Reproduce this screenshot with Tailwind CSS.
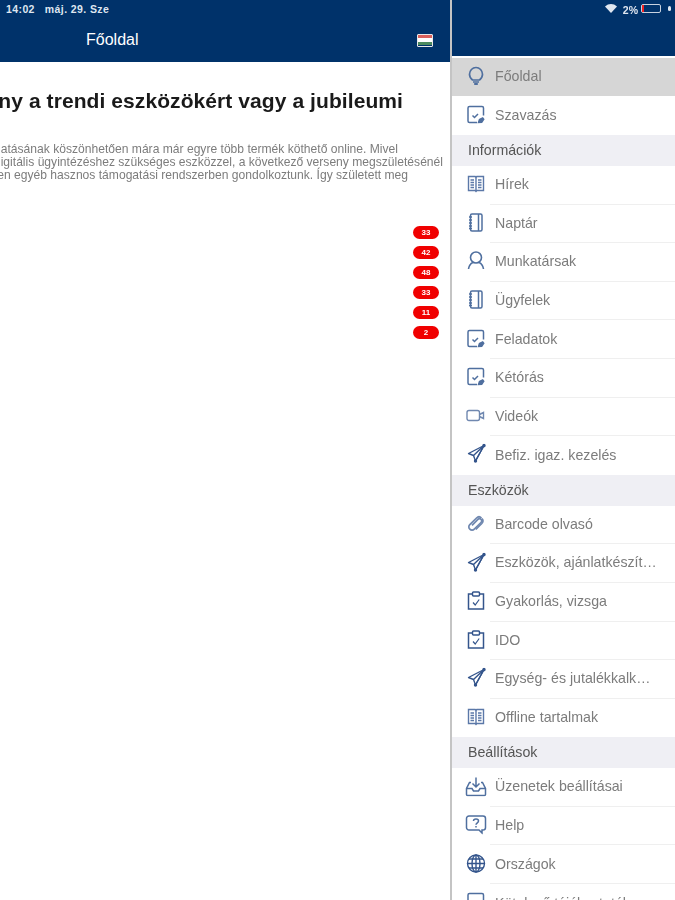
<!DOCTYPE html>
<html lang="hu">
<head>
    <meta charset="UTF-8">
    <meta name="viewport" content="width=device-width, initial-scale=1.0">
    <title>Főoldal</title>
    <script src="https://cdn.jsdelivr.net/npm/@tailwindcss/browser@4"></script>
</head>
<body class="font-['Liberation_Sans',Arial,sans-serif] bg-white">
    <!-- Icon set -->
    <svg class="hidden">
        <symbol id="i-bulb" viewBox="0 0 20 20" fill="none" stroke="currentColor" stroke-width="1.7"><path d="M6.5 14.500C4.500 13 3.500 11 3.500 8.800 3.500 5 6.400 2 10 2s6.500 3 6.500 6.800c0 2.200-1 4.200-3 5.700z"/><path d="M7 16.500h6"/><path d="M8.200 18.500h3.600" stroke-width="2.200"/></symbol>
        <symbol id="i-note" viewBox="0 0 20 20" fill="none" stroke="currentColor" stroke-width="1.500"><path d="M17.500 11V3.500A1.500 1.500 0 0 0 16 2H3.500A1.500 1.500 0 0 0 2 3.500v13A1.500 1.500 0 0 0 3.500 18H11"/><path d="M6.500 11l2 2 3.500-3.500"/><path d="M12.500 18l1-3 3.200-1.500 1 1.300-2 3z" fill="currentColor"/></symbol>
        <symbol id="i-book" viewBox="0 0 20 20" fill="none" stroke="currentColor" stroke-width="1.400"><path d="M2.500 3h6.700l.8 1 .8-1h6.700v14h-6.700l-.8 1-.8-1H2.500z"/><path d="M10 4v13M4.500 6.500h3.500M4.500 9h3.500M4.500 11.500h3.500M4.500 14h3.500M12 6.500h3.500M12 9h3.500M12 11.500h3.500M12 14h3.500"/></symbol>
        <symbol id="i-notebook" viewBox="0 0 20 20" fill="none" stroke="currentColor" stroke-width="1.500"><rect x="4.500" y="1.500" width="11.500" height="17" rx="1.500"/><path d="M12.500 1.500v17M3 4.500h3M3 7.500h3M3 10.500h3M3 13.500h3M3 16h3"/></symbol>
        <symbol id="i-user" viewBox="0 0 20 20" fill="none" stroke="currentColor" stroke-width="1.600"><path d="M10 1.500a5.500 5.500 0 0 1 5.500 5.500c0 3-2.500 5.500-5.500 5.500S4.500 10 4.500 7A5.500 5.500 0 0 1 10 1.500z"/><path d="M7 12C4.500 13 3 15 2.500 18.500M13 12c2.500 1 4 3 4.500 6.500"/></symbol>
        <symbol id="i-video" viewBox="0 0 20 20" fill="none" stroke="currentColor" stroke-width="1.400"><rect x="1" y="5" width="12.500" height="10" rx="2"/><path d="M13.500 9l4-2v6l-4-2"/></symbol>
        <symbol id="i-plane" viewBox="0 0 20 20" fill="none" stroke="currentColor" stroke-width="1.400" stroke-linejoin="round"><path d="M18 2L2.500 10l5 2 2 5.500z"/><path d="M18 2L7.500 12M18 2L9.500 17.500"/><circle cx="18" cy="2" r="1" fill="currentColor"/><circle cx="9.500" cy="17.500" r="1" fill="currentColor"/></symbol>
        <symbol id="i-clip" viewBox="0 0 20 20" fill="none" stroke="currentColor" stroke-width="1.700"><path d="M15.500 4.500c-1.500-1.500-3.500-1.500-5 0L3.800 11.200c-1.300 1.300-1.300 3.300 0 4.500 1.300 1.300 3.200 1.300 4.500 0L15 9c1-1 1-2.300.1-3.200-.9-.9-2.200-.9-3.200.1L6 11.800"/><path d="M16 5c1.200 1.500 1.200 3.500-.2 5l-6 6"/></symbol>
        <symbol id="i-board" viewBox="0 0 20 20" fill="none" stroke="currentColor" stroke-width="1.500"><path d="M6.500 3.500H2.500v15h15v-15h-4"/><rect x="6.500" y="1.500" width="7" height="4" rx="1"/><path d="M7 12l2.200 2.500 4-5.500" stroke-width="1.200"/></symbol>
        <symbol id="i-inbox" viewBox="0 0 22 20" fill="none" stroke="currentColor" stroke-width="1.500"><path d="M6 6H4.500L1.500 12v6a1 1 0 0 0 1 1h17a1 1 0 0 0 1-1v-6l-3-6H16"/><path d="M1.500 12h5.500l1.500 2.500h5L15 12h5.500"/><path d="M11 1v9M7.500 7l3.500 3.500L14.500 7"/></symbol>
        <symbol id="i-help" viewBox="0 0 22 20" fill="none" stroke="currentColor" stroke-width="1.500"><path d="M4 1.500h14a2.500 2.500 0 0 1 2.500 2.500v9a2.500 2.500 0 0 1-2.500 2.500h-1v3l-3-3H4A2.500 2.500 0 0 1 1.500 13V4A2.500 2.500 0 0 1 4 1.500z"/><path d="M8.500 6.500C8.500 5 9.600 4.500 11 4.500s2.500.8 2.500 2c0 1.800-2.500 1.800-2.500 3.800M11 11.500v1.500"/></symbol>
        <symbol id="i-globe" viewBox="0 0 20 20" fill="none" stroke="currentColor" stroke-width="1.400"><circle cx="10" cy="10" r="8.500"/><ellipse cx="10" cy="10" rx="4" ry="8.500"/><path d="M10 1.500v17M1.500 10h17M2.800 5.500h14.400M2.800 14.500h14.400"/></symbol>
    </svg>

    <div class="flex h-[900px] w-[675px] overflow-hidden blur-[0.45px]">
        <!-- Main panel -->
        <main class="w-[450px] shrink-0 overflow-hidden">
            <header class="h-[62px] bg-[#00326a] text-white">
                <div class="flex h-[18px] items-center pl-[6px] pt-[1px] text-[10.5px] font-bold text-[#dfe6f0]">
                    <span class="tracking-[0.4px]">14:02</span>
                    <span class="ml-[10px] tracking-[0.4px]">máj. 29. Sze</span>
                </div>
                <div class="flex h-[44px] items-center pl-[86px] text-[16px]">
                    <span>Főoldal</span>
                    <span class="ml-auto mr-[17px] flex h-[13px] w-[16px] flex-col overflow-hidden rounded-[1px] border border-[#e8e8e8]">
                        <span class="h-1/3 bg-[#d9605c]"></span>
                        <span class="h-1/3 bg-white"></span>
                        <span class="h-1/3 bg-[#4c8a5e]"></span>
                    </span>
                </div>
            </header>
            <article class="pr-[6px]">
                <div class="flex justify-end pr-[41px] pt-[27px]">
                    <h1 class="whitespace-nowrap text-[21px] font-bold leading-[24px] tracking-[0.08px] text-[#1a1a1a]">Verseny a trendi eszközökért vagy a jubileumi</h1>
                </div>
                <div class="mt-[30px] flex flex-col text-[12.1px] leading-[13px] text-[#7c7c7c]">
                    <p class="flex justify-end pr-[46px] whitespace-nowrap">A fejlesztések folyamatos támogatásának köszönhetően mára már egyre több termék köthető online. Mivel</p>
                    <p class="flex justify-end pr-[1px] whitespace-nowrap">munkatársaink rendelkeznek a digitális ügyintézéshez szükséges eszközzel, a következő verseny megszületésénél</p>
                    <p class="flex justify-end pr-[36px] whitespace-nowrap">már nem csak ezen, hanem több területen egyéb hasznos támogatási rendszerben gondolkoztunk. Így született meg</p>
                </div>
                <ul class="mt-[44px] flex flex-col items-end gap-[7px] pr-[5px] text-[8px] font-bold text-white">
                    <li class="flex h-[13px] w-[26px] items-center justify-center rounded-full bg-[#f00000]">33</li>
                    <li class="flex h-[13px] w-[26px] items-center justify-center rounded-full bg-[#f00000]">42</li>
                    <li class="flex h-[13px] w-[26px] items-center justify-center rounded-full bg-[#f00000]">48</li>
                    <li class="flex h-[13px] w-[26px] items-center justify-center rounded-full bg-[#f00000]">33</li>
                    <li class="flex h-[13px] w-[26px] items-center justify-center rounded-full bg-[#f00000]">11</li>
                    <li class="flex h-[13px] w-[26px] items-center justify-center rounded-full bg-[#f00000]">2</li>
                </ul>
            </article>
        </main>

        <!-- Side menu -->
        <aside class="w-[225px] shrink-0 overflow-hidden border-l-2 border-[#c4c4c4] text-[14.2px] text-[#7c7c7c]">
            <div class="-ml-[2px] flex h-[56px] items-start justify-end bg-[#00326a] pr-[4px] pt-[3px] text-[10.5px] font-bold text-[#dfe6f0]">
                <svg class="mt-[1px] h-[9px] w-[12px]" viewBox="0 0 12 9" fill="currentColor"><path d="M6 9L0 2.500C3.500-.8 8.500-.8 12 2.500z"/></svg>
                <span class="ml-[6px]">2%</span>
                <span class="ml-[3px] mt-[1px] h-[9px] w-[20px] rounded-[2px] border border-[#c8d2e0]"><span class="block h-full w-[2px] bg-[#f02020]"></span></span>
                <span class="ml-[7px] mt-[3px] h-[5px] w-[3px] rounded-full bg-[#dfe6f0]"></span>
            </div>
            <nav class="pt-[1.8px] [&_a_svg]:-translate-y-[1.5px]">
                <a class="flex h-[38.6px] items-center bg-[#d6d6d6] pl-[14px]"><svg class="h-[20px] w-[20px] text-[#4f6f9f]"><use href="#i-bulb"/></svg><span class="ml-[9px]">Főoldal</span></a>
                <a class="flex h-[38.6px] items-center pl-[14px]"><svg class="h-[20px] w-[20px] text-[#4f6f9f]"><use href="#i-note"/></svg><span class="ml-[9px]">Szavazás</span></a>
                <h2 class="flex h-[31px] items-center bg-[#efeff4] pl-[16px] text-[#555]">Információk</h2>

                <a class="flex h-[38.6px] items-center pl-[14px]"><svg class="h-[20px] w-[20px] text-[#5b78a8]"><use href="#i-book"/></svg><span class="ml-[4px] flex h-full flex-1 items-center border-b border-[#efefef] pl-[5px]">Hírek</span></a>
                <a class="flex h-[38.6px] items-center pl-[14px]"><svg class="h-[20px] w-[20px] text-[#4f6f9f]"><use href="#i-notebook"/></svg><span class="ml-[4px] flex h-full flex-1 items-center border-b border-[#efefef] pl-[5px]">Naptár</span></a>
                <a class="flex h-[38.6px] items-center pl-[14px]"><svg class="h-[20px] w-[20px] text-[#4f6f9f]"><use href="#i-user"/></svg><span class="ml-[4px] flex h-full flex-1 items-center border-b border-[#efefef] pl-[5px]">Munkatársak</span></a>
                <a class="flex h-[38.6px] items-center pl-[14px]"><svg class="h-[20px] w-[20px] text-[#4f6f9f]"><use href="#i-notebook"/></svg><span class="ml-[4px] flex h-full flex-1 items-center border-b border-[#efefef] pl-[5px]">Ügyfelek</span></a>
                <a class="flex h-[38.6px] items-center pl-[14px]"><svg class="h-[20px] w-[20px] text-[#4f6f9f]"><use href="#i-note"/></svg><span class="ml-[4px] flex h-full flex-1 items-center border-b border-[#efefef] pl-[5px]">Feladatok</span></a>
                <a class="flex h-[38.6px] items-center pl-[14px]"><svg class="h-[20px] w-[20px] text-[#4f6f9f]"><use href="#i-note"/></svg><span class="ml-[4px] flex h-full flex-1 items-center border-b border-[#efefef] pl-[5px]">Kétórás</span></a>
                <a class="flex h-[38.6px] items-center pl-[14px]"><svg class="h-[20px] w-[20px] text-[#7088b0]"><use href="#i-video"/></svg><span class="ml-[4px] flex h-full flex-1 items-center border-b border-[#efefef] pl-[5px]">Videók</span></a>
                <a class="flex h-[38.6px] items-center pl-[14px]"><svg class="h-[20px] w-[20px] text-[#34558c]"><use href="#i-plane"/></svg><span class="ml-[9px]">Befiz. igaz. kezelés</span></a>
                <h2 class="flex h-[31px] items-center bg-[#efeff4] pl-[16px] text-[#555]">Eszközök</h2>

                <a class="flex h-[38.6px] items-center pl-[14px]"><svg class="h-[20px] w-[20px] text-[#7088b0]"><use href="#i-clip"/></svg><span class="ml-[4px] flex h-full flex-1 items-center border-b border-[#efefef] pl-[5px]">Barcode olvasó</span></a>
                <a class="flex h-[38.6px] items-center pl-[14px]"><svg class="h-[20px] w-[20px] text-[#34558c]"><use href="#i-plane"/></svg><span class="ml-[4px] flex h-full flex-1 items-center border-b border-[#efefef] pl-[5px]">Eszközök, ajánlatkészít…</span></a>
                <a class="flex h-[38.6px] items-center pl-[14px]"><svg class="h-[20px] w-[20px] text-[#34558c]"><use href="#i-board"/></svg><span class="ml-[4px] flex h-full flex-1 items-center border-b border-[#efefef] pl-[5px]">Gyakorlás, vizsga</span></a>
                <a class="flex h-[38.6px] items-center pl-[14px]"><svg class="h-[20px] w-[20px] text-[#34558c]"><use href="#i-board"/></svg><span class="ml-[4px] flex h-full flex-1 items-center border-b border-[#efefef] pl-[5px]">IDO</span></a>
                <a class="flex h-[38.6px] items-center pl-[14px]"><svg class="h-[20px] w-[20px] text-[#34558c]"><use href="#i-plane"/></svg><span class="ml-[4px] flex h-full flex-1 items-center border-b border-[#efefef] pl-[5px]">Egység- és jutalékkalk…</span></a>
                <a class="flex h-[38.6px] items-center pl-[14px]"><svg class="h-[20px] w-[20px] text-[#5b78a8]"><use href="#i-book"/></svg><span class="ml-[9px]">Offline tartalmak</span></a>
                <h2 class="flex h-[31px] items-center bg-[#efeff4] pl-[16px] text-[#555]">Beállítások</h2>

                <a class="flex h-[38.6px] items-center pl-[13px]"><svg class="h-[20px] w-[22px] text-[#4f6f9f]"><use href="#i-inbox"/></svg><span class="ml-[3px] flex h-full flex-1 items-center border-b border-[#efefef] pl-[5px]">Üzenetek beállításai</span></a>
                <a class="flex h-[38.6px] items-center pl-[13px]"><svg class="h-[20px] w-[22px] text-[#4f6f9f]"><use href="#i-help"/></svg><span class="ml-[3px] flex h-full flex-1 items-center border-b border-[#efefef] pl-[5px]">Help</span></a>
                <a class="flex h-[38.6px] items-center pl-[14px]"><svg class="h-[20px] w-[20px] text-[#34558c]"><use href="#i-globe"/></svg><span class="ml-[4px] flex h-full flex-1 items-center border-b border-[#efefef] pl-[5px]">Országok</span></a>
                <a class="flex h-[38.6px] items-center pl-[14px]"><svg class="h-[20px] w-[20px] text-[#4f6f9f]"><use href="#i-note"/></svg><span class="ml-[9px] flex h-full flex-1 items-center">Kötelező tájékoztatók</span></a>
            </nav>
        </aside>
    </div>
</body>
</html>
